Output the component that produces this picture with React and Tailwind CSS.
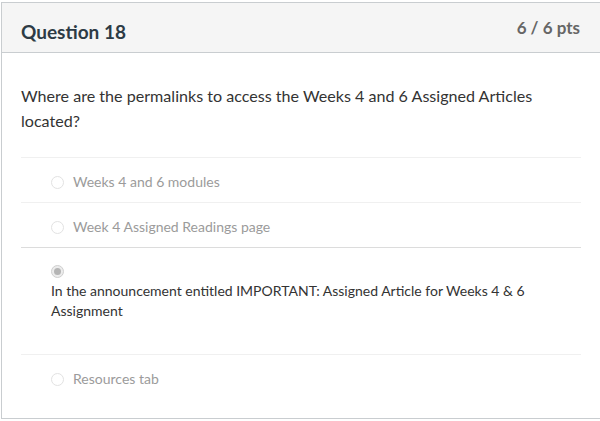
const answers = [
  { id: 'a1', text: 'Weeks 4 and 6 modules' },
  { id: 'a2', text: 'Week 4 Assigned Readings page' },
  { id: 'a3', text: 'In the announcement entitled IMPORTANT: Assigned Article for Weeks 4 & 6 Assignment', selected: true },
  { id: 'a4', text: 'Resources tab' },
]

function Radio({ checked }){
  if(checked){
    return (
      <span className="flex h-[13px] w-[13px] items-center justify-center rounded-full border border-[#cfcfcf] bg-[#ececec]">
        <span className="h-[7px] w-[7px] rounded-full bg-[#b4b4b4]" />
      </span>
    )
  }
  return <span className="block h-[13px] w-[13px] rounded-full border border-[#e2e2e2] bg-white" />
}

export default function App(){
  return (
    <div className="h-[421px] w-[600px] overflow-hidden bg-white font-['Lato','Liberation_Sans',sans-serif]">
      <div className="ml-[1px] mt-[2px] w-[600px] border border-[#c9cdd0] bg-white">
        <div className="flex h-[50px] justify-between border-b border-[#c9cdd0] bg-[#f5f5f5] pl-[19px] pr-[20px]">
          <h2 className="pt-[17px] text-[19px] font-bold leading-[23px] text-[#2d3b45]">Question 18</h2>
          <span className="pt-[14px] text-[17px] font-bold leading-[22px] text-[#666]">6 / 6 pts</span>
        </div>

        <div className="px-[19px] pb-[29px] pt-[30px]">
          <p className="pr-[36px] text-[16.1px] leading-[25px] text-[#333]">
            Where are the permalinks to access the Weeks 4 and 6 Assigned Articles located?
          </p>

          <div className="mt-[24px]">
            {answers.map((answer, i) => (
              <div
                key={answer.id}
                className={`border-t pl-[30px] ${answer.selected ? 'border-[#dcdcdc] pb-[33px] pt-[17px]' : 'border-[#f0f0f0] pt-[14px]'} ${i === 3 ? 'pb-0' : answer.selected ? '' : 'pb-[10px]'}`}
              >
                {answer.selected ? (
                  <div>
                    <Radio checked />
                    <p className="mt-[3px] text-[14px] leading-[20px] text-[#333]">{answer.text}</p>
                  </div>
                ) : (
                  <div className="flex items-center gap-[9px]">
                    <Radio />
                    <span className="text-[14px] leading-[20px] text-[#9b9b9b]">{answer.text}</span>
                  </div>
                )}
              </div>
            ))}
          </div>
        </div>
      </div>
    </div>
  )
}
